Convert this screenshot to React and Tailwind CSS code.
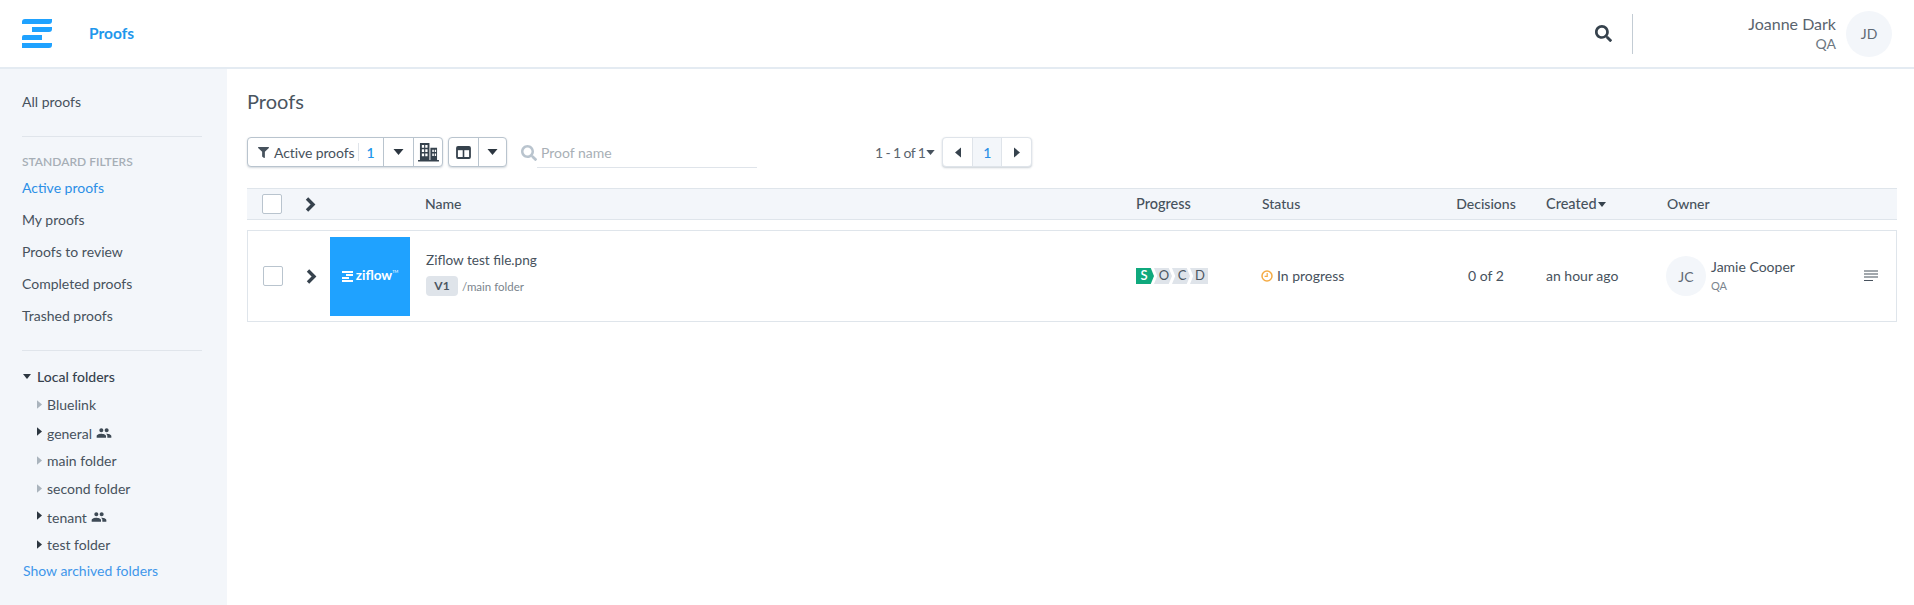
import React from "react";
import { MdPeople } from "react-icons/md";
import { FaSearch, FaFilter } from "react-icons/fa";

const Caret = ({ dir = "down", className = "" }) => {
  const pts = { down: "0,0 10,0 5,6", right: "0,0 6,5 0,10", left: "6,0 0,5 6,10" }[dir];
  const vb = dir === "down" ? "0 0 10 6" : "0 0 6 10";
  return (
    <svg viewBox={vb} className={className} fill="currentColor" aria-hidden="true">
      <polygon points={pts} />
    </svg>
  );
};

const Chevron = ({ className = "" }) => (
  <svg viewBox="0 0 11 15" className={`w-[11px] h-[15px] ${className}`} fill="none" stroke="#36424d" strokeWidth="3.4" aria-hidden="true">
    <polyline points="2,1.5 8,7.5 2,13.5" />
  </svg>
);

const Logo = () => (
  <div className="w-[30px] h-[30px] flex flex-col items-start gap-[3px]">
    <div className="w-[30px] h-[5px] bg-[#1fa2ff] rounded-tl-[3px] rounded-br-[3px] mt-0" />
    <div className="w-[20px] h-[5px] bg-[#1fa2ff] ml-[10px] rounded-br-[3px]" />
    <div className="w-[20px] h-[5px] bg-[#1fa2ff] rounded-tl-[2px]" />
    <div className="w-[30px] h-[5px] bg-[#1fa2ff] rounded-br-[3px]" />
  </div>
);

const SideLink = ({ children, active }) => (
  <div className={`h-[32px] pb-[2px] flex items-center text-[14px] ${active ? "text-[#2b8fe6]" : "text-[#47525d]"}`}>{children}</div>
);

const Folder = ({ name, dark, shared }) => (
  <div className={`h-[28px] flex items-center text-[14px] text-[#47525d] pl-[15px] ${shared ? "" : "pb-[2px]"}`}>
    <Caret dir="right" className={`w-[5px] h-[9px] ${shared ? "mb-[3px]" : ""} ${dark ? "text-[#2c3640]" : "text-[#aab4bd]"}`} />
    <span className="ml-[5px]">{name}</span>
    {shared && <MdPeople className="ml-[4px] text-[#3e4a55] text-[16px]" />}
  </div>
);

const Building = () => (
  <svg viewBox="0 0 22 20" className="w-[21px] h-[19px]" aria-hidden="true">
    <path fill="#36424d" fillRule="evenodd" d="M2 0h10v18H2zM13 5h7v13h-7zM0 18h22v1.6H0zM4 2v3h2.4V2zM7.6 2v3H10V2zM4 6.5v3h2.4v-3zM7.6 6.5v3H10v-3zM4 11v3h2.4v-3zM7.6 11v3H10v-3zM15 7v2.6h1.6V7zM17.6 7v2.6H19V7zM15 11v2.6h1.6V11zM17.6 11v2.6H19V11z" />
  </svg>
);

const Columns = () => (
  <svg viewBox="0 0 15 13" className="w-[15px] h-[13px]" fill="none" aria-hidden="true">
    <rect x="1" y="1" width="13" height="11" rx="1" stroke="#36424d" strokeWidth="1.8" />
    <path d="M1 3h13" stroke="#36424d" strokeWidth="2.4" />
    <path d="M7.5 2v10" stroke="#36424d" strokeWidth="1.6" />
  </svg>
);

const Stage = ({ letter, first, active }) => (
  <div
    className={`w-[18px] h-[16px] flex items-center justify-center text-[13px] ${active ? "bg-[#0fa97d] text-white font-semibold" : "bg-[#dfe4ea] text-[#4b5661]"} ${first ? "pr-[2px]" : "pl-[2px]"}`}
    style={{
      clipPath: first
        ? "polygon(0 0, 82% 0, 100% 50%, 82% 100%, 0 100%)"
        : letter === "D"
        ? "polygon(0 0, 100% 0, 100% 100%, 0 100%, 18% 50%)"
        : "polygon(0 0, 82% 0, 100% 50%, 82% 100%, 0 100%, 18% 50%)",
    }}
  >
    {letter}
  </div>
);

const COLS = "grid grid-cols-[52px_30px_95px_711px_125px_180px_90px_135px_1fr] items-center";

export default function App() {
  return (
    <div className="min-h-[605px] h-[605px] flex flex-col overflow-hidden bg-white text-[#47525d] [font-family:Lato,'Noto_Sans',sans-serif]">
      <header className="h-[69px] shrink-0 border-b-2 border-[#e4ebf2] flex items-center pl-[22px] pr-[22px] bg-white">
        <Logo />
        <span className="ml-[37px] text-[15.5px] font-bold text-[#1f97ec]">Proofs</span>
        <div className="ml-auto flex items-center">
          <FaSearch className="text-[17px] text-[#36424d]" />
          <div className="ml-[20px] w-px h-[40px] bg-[#c3ccd4]" />
          <div className="ml-[110px] w-[93px] text-right leading-none">
            <div className="text-[16px] text-[#5a646e] whitespace-nowrap">Joanne Dark</div>
            <div className="text-[14px] text-[#6d7781] mt-[5px]">QA</div>
          </div>
          <div className="ml-[10px] w-[46px] h-[46px] rounded-full bg-[#f3f6fa] flex items-center justify-center text-[14px] text-[#5f6a75]">JD</div>
        </div>
      </header>

      <div className="flex-1 flex min-h-0">
        <aside className="w-[227px] shrink-0 bg-[#f3f6fa] px-[22px] pt-[20px]">
          <div className="h-[26px] pb-[2px] flex items-center text-[14px] text-[#47525d]">All proofs</div>
          <div className="mt-[21px] w-[180px] h-px bg-[#e0e5eb]" />
          <div className="mt-[18px] h-[14px] flex items-center text-[12px] font-semibold text-[#a6aeb6] uppercase whitespace-nowrap">Standard filters</div>
          <div className="mt-[3px]">
            <SideLink active>Active proofs</SideLink>
            <SideLink>My proofs</SideLink>
            <SideLink>Proofs to review</SideLink>
            <SideLink>Completed proofs</SideLink>
            <SideLink>Trashed proofs</SideLink>
          </div>
          <div className="mt-[18px] w-[180px] h-px bg-[#e0e5eb]" />
          <div className="mt-[14px] h-[24px] pb-[2px] flex items-center text-[14px] font-medium text-[#36424d] pl-px">
            <Caret dir="down" className="w-[8px] h-[5px] text-[#2c3640]" />
            <span className="ml-[6px]">Local folders</span>
          </div>
          <div className="mt-[2px]">
            <Folder name="Bluelink" />
            <Folder name="general" dark shared />
            <Folder name="main folder" />
            <Folder name="second folder" />
            <Folder name="tenant" dark shared />
            <Folder name="test folder" dark />
          </div>
          <div className="h-[24px] pb-[2px] flex items-center text-[14px] text-[#3f97ea] pl-px">Show archived folders</div>
        </aside>

        <main className="flex-1 min-w-0 pl-[20px] pr-[17px] pt-[18px]">
          <h1 className="h-[28px] flex items-center text-[20px] font-normal text-[#4a5560]">Proofs</h1>

          <div className="mt-[22px] h-[30px] flex items-start">
            <div className="h-[30px] w-[196px] flex items-stretch border border-[#b9c4ce] rounded-[4px] shadow-[0_1px_2px_rgba(80,100,120,0.25)] text-[14px] bg-white">
              <div className="w-[135px] flex items-center pl-[10px]">
                <FaFilter className="text-[11px] text-[#47525d]" />
                <span className="ml-[5px] text-[#47525d] whitespace-nowrap tracking-[-0.1px]">Active proofs</span>
                <span className="ml-[4px] w-px h-[18px] bg-[#dfe4ea]" />
                <span className="ml-[7px] text-[#1f97ec] font-semibold">1</span>
              </div>
              <div className="w-[30px] border-l border-[#b9c4ce] flex items-center justify-center">
                <Caret dir="down" className="w-[11px] h-[6px] text-[#2c3640]" />
              </div>
              <div className="flex-1 border-l border-[#b9c4ce] flex items-center justify-center">
                <Building />
              </div>
            </div>
            <div className="ml-[5px] h-[30px] w-[59px] flex items-stretch border border-[#b9c4ce] rounded-[4px] shadow-[0_1px_2px_rgba(80,100,120,0.25)] bg-white">
              <div className="w-[29px] flex items-center justify-center"><Columns /></div>
              <div className="flex-1 border-l border-[#b9c4ce] flex items-center justify-center">
                <Caret dir="down" className="w-[11px] h-[6px] text-[#2c3640]" />
              </div>
            </div>
            <FaSearch className="ml-[14px] mt-[8px] text-[16px] text-[#b9c4ce]" />
            <div className="w-[220px] h-[31px] pt-px border-b border-[#dfe4ea] flex items-center pl-[4px] text-[14px] text-[#a8afb6]">Proof name</div>
            <div className="ml-[118px] h-[30px] flex items-center text-[14px] text-[#5a646e] whitespace-nowrap tracking-[-0.6px]">
              1 - 1 of 1
              <Caret dir="down" className="ml-[1px] w-[9px] h-[5px] text-[#47525d]" />
            </div>
            <div className="ml-[7px] h-[30px] w-[90px] flex items-stretch border border-[#dfe4ea] rounded-[4px] shadow-[0_1px_2px_rgba(80,100,120,0.3)] bg-white text-[14px]">
              <div className="w-[29px] flex items-center justify-center"><Caret dir="left" className="w-[6px] h-[11px] text-[#36424d]" /></div>
              <div className="w-[30px] border-x border-[#dfe4ea] bg-[#f3f6fa] flex items-center justify-center text-[#2b8fe6] font-medium">1</div>
              <div className="flex-1 flex items-center justify-center"><Caret dir="right" className="w-[6px] h-[11px] text-[#36424d]" /></div>
            </div>
          </div>

          <div className={`${COLS} mt-[21px] h-[32px] bg-[#f3f6fa] border-y border-[#dfe5eb] px-px text-[14px] text-[#47525d]`}>
            <div className="pl-[14px]"><div className="w-[20px] h-[20px] bg-white border border-[#b9c4ce] rounded-[2px]" /></div>
            <div className="pl-[5px] flex"><Chevron /></div>
            <div />
            <div className="font-medium pb-[2px]">Name</div>
            <div className="font-medium text-[14.5px]">Progress</div>
            <div className="font-medium pb-[2px] pl-px">Status</div>
            <div className="text-center font-medium pb-[2px]">Decisions</div>
            <div className="pl-[15px] flex items-center font-medium text-[14.5px]">Created<Caret dir="down" className="ml-[1px] w-[8px] h-[5px] text-[#36424d]" /></div>
            <div className="font-medium pb-[2px] pl-px">Owner</div>
          </div>

          <div className={`${COLS} mt-[10px] h-[92px] border border-[#dfe5eb] text-[14px] text-[#47525d] relative`}>
            <div className="pl-[15px]"><div className="w-[20px] h-[20px] bg-white border border-[#b9c4ce] rounded-[2px]" /></div>
            <div className="pl-[6px] flex"><Chevron /></div>
            <div className="flex items-center">
              <div className="w-[80px] h-[79px] bg-[#1fa2ff] flex items-center justify-center text-white">
                <div className="flex flex-col gap-px mr-[3px]">
                  <span className="block w-[11px] h-[2px] bg-white" />
                  <span className="block w-[7px] h-[2px] bg-white ml-[4px]" />
                  <span className="block w-[7px] h-[2px] bg-white" />
                  <span className="block w-[11px] h-[2px] bg-white" />
                </div>
                <span className="text-[13.5px] font-bold leading-none">ziflow</span>
                <span className="text-[4px] leading-none self-center mb-[9px]">TM</span>
              </div>
            </div>
            <div className="pl-px">
              <div className="text-[13.6px] leading-none -mt-[2px]">Ziflow test file.png</div>
              <div className="mt-[9px] flex items-center">
                <span className="w-[32px] h-[20px] rounded-[4px] bg-[#dfe4ea] flex items-center justify-center text-[12px] font-bold text-[#4b5661]">V1</span>
                <span className="ml-[4px] text-[11.5px] text-[#7b858e]">/main folder</span>
              </div>
            </div>
            <div className="flex">
              <Stage letter="S" first active />
              <Stage letter="O" />
              <Stage letter="C" />
              <Stage letter="D" />
            </div>
            <div className="flex items-center">
              <svg viewBox="0 0 12 12" className="w-[12px] h-[12px]" fill="none" stroke="#f5ac45" strokeWidth="1.5" aria-hidden="true">
                <circle cx="6" cy="6" r="5" />
                <path d="M6.2 3v3.300H3.600" strokeWidth="1.2" />
              </svg>
              <span className="ml-[4px] pb-px">In progress</span>
            </div>
            <div className="text-center pb-px">0 of 2</div>
            <div className="pl-[15px] pb-px">an hour ago</div>
            <div className="flex items-center">
              <div className="w-[40px] h-[40px] rounded-full bg-[#f3f6fa] flex items-center justify-center text-[14px] text-[#5f6a75]">JC</div>
              <div className="ml-[5px] leading-none pb-[2px]">
                <div className="text-[14px]">Jamie Cooper</div>
                <div className="mt-[6px] text-[11px] text-[#7b858e]">QA</div>
              </div>
              <svg viewBox="0 0 14 12" className="ml-auto mr-[18px] w-[14px] h-[12px]" stroke="#47525d" strokeWidth="1.2" aria-hidden="true">
                <path d="M0 1h14M0 4h14M0 7h14M0 10.500h9" />
              </svg>
            </div>
          </div>
        </main>
      </div>
    </div>
  );
}
